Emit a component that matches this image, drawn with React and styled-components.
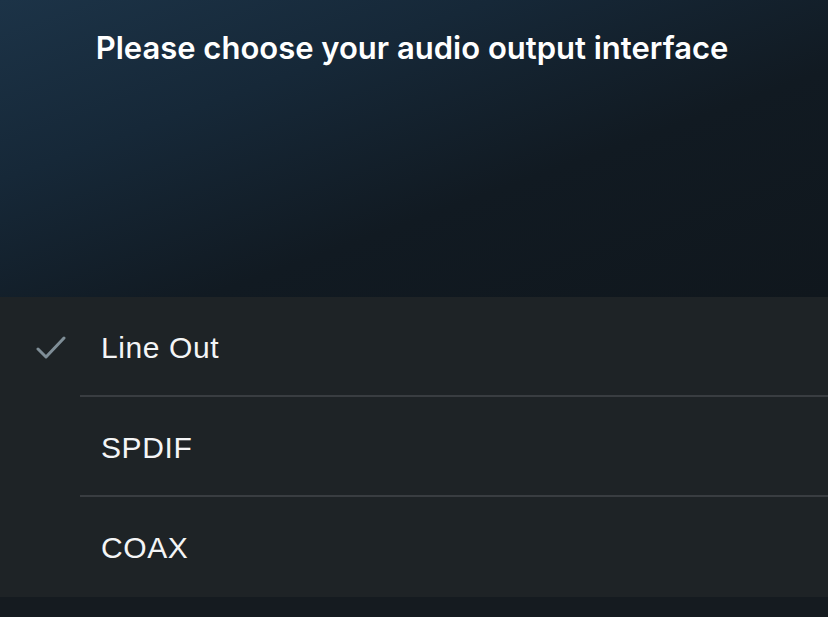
import React from 'react'
import styled, { createGlobalStyle } from 'styled-components'

const Global = createGlobalStyle`
  html, body { margin: 0; padding: 0; }
  body {
    width: 828px;
    height: 617px;
    overflow: hidden;
    background: #151b20;
  }
`

const Screen = styled.div`
  width: 828px;
  height: 617px;
  display: flex;
  flex-direction: column;
  background: #151b20;
`

const Header = styled.header`
  height: 297px;
  padding-top: 29px;
  box-sizing: border-box;
  display: flex;
  justify-content: center;
  background: linear-gradient(160deg, #1c3347 0%, #162838 30%, #111a22 62%, #10171d 100%);
`

const Title = styled.h1`
  margin: 0;
  font-family: Inter, "Open Sans", sans-serif;
  font-weight: 600;
  font-size: 31px;
  line-height: 38px;
  color: #ffffff;
  padding-right: 4px;
`

const List = styled.ul`
  margin: 0;
  padding: 0;
  list-style: none;
  background: #1e2326;
`

const Row = styled.li`
  height: 100px;
  display: flex;
  align-items: stretch;
`

const CheckCell = styled.div`
  width: 80px;
  flex: none;
  display: flex;
  align-items: center;
  padding-left: 36px;
  padding-top: 2px;
  box-sizing: border-box;
`

const Label = styled.div`
  flex: 1;
  display: flex;
  align-items: center;
  padding-left: 21px;
  padding-top: 4px;
  font-family: "Liberation Sans", Arial, sans-serif;
  font-size: 30px;
  letter-spacing: 0.6px;
  color: #f4f5f6;
  border-bottom: 2px solid ${p => (p.last ? 'transparent' : '#393d41')};
`

const Check = () => (
  <svg width="30" height="24" viewBox="0 0 30 24" fill="none">
    <path d="M2 13 L10 21 L28 2" stroke="#7f8e97" strokeWidth="3" strokeLinecap="round" strokeLinejoin="round" />
  </svg>
)

const options = ['Line Out', 'SPDIF', 'COAX']

export default function App() {
  const selected = 0
  return (
    <Screen>
      <Global />
      <Header>
        <Title>Please choose your audio output interface</Title>
      </Header>
      <List>
        {options.map((o, i) => (
          <Row key={o}>
            <CheckCell>{i === selected && <Check />}</CheckCell>
            <Label last={i === options.length - 1}>{o}</Label>
          </Row>
        ))}
      </List>
    </Screen>
  )
}
